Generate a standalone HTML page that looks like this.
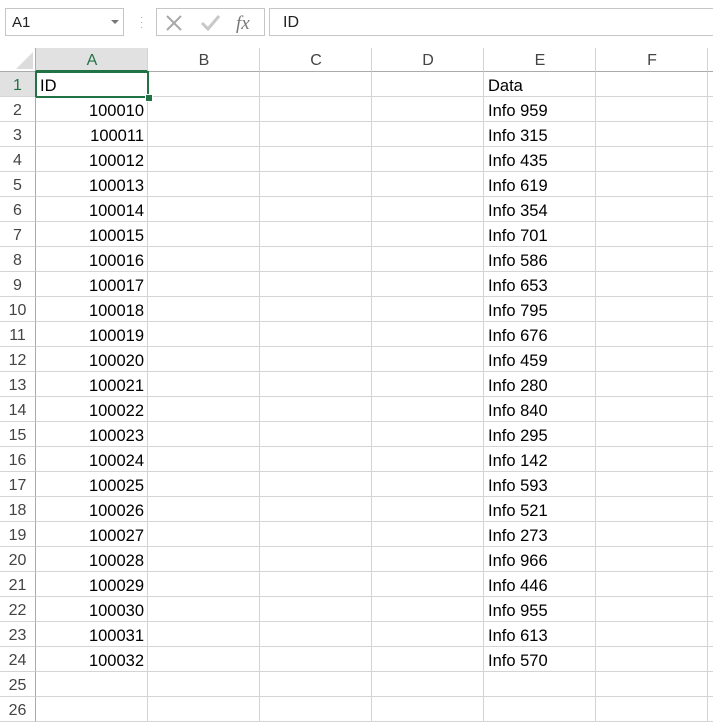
<!DOCTYPE html>
<html><head><meta charset="utf-8"><style>
body{margin:0;width:713px;height:724px;background:#fff;font-family:"Liberation Sans",sans-serif;position:relative;overflow:hidden}
.a{position:absolute}
.g{position:absolute;left:0;top:48px;display:grid;grid-template-columns:36px repeat(6,112px) 20px;grid-template-rows:24px repeat(26,25px)}
.g div{box-sizing:border-box;border-right:1px solid #d4d4d4;border-bottom:1px solid #d4d4d4;padding:2px 3px 0 4px;font-size:16.5px;line-height:24px;white-space:nowrap;overflow:hidden;color:#000}
.g div.r{text-align:right}
.g div.h{text-align:center;color:#444;border-bottom:1px solid #ababab;line-height:24px;font-size:16px;padding-top:1px}
.g div.n{text-align:center;color:#444;border-right:1px solid #ababab;padding:2px 0 0 0;font-size:16px}
</style></head><body>
<div class="a" style="left:5px;top:8px;width:119px;height:28px;border:1px solid #c6c6c6;font-size:15px;line-height:28px;color:#222;padding-left:6px;box-sizing:border-box">A1</div>
<div class="a" style="left:111px;top:20px;width:0;height:0;border-left:4px solid transparent;border-right:4px solid transparent;border-top:4px solid #777"></div>
<div class="a" style="left:140px;top:15px;color:#aaa;font-size:10px;line-height:5px">·<br>·<br>·</div>
<div class="a" style="left:156px;top:8px;width:109px;height:28px;border:1px solid #c6c6c6;box-sizing:border-box"></div>
<svg class="a" style="left:164px;top:13px" width="95" height="20"><path d="M3 3L17 17M17 3L3 17" stroke="#a8a8a8" stroke-width="2"/><path d="M38 10L44 16L55 3" stroke="#c8c8c8" stroke-width="3" fill="none"/><text x="72" y="16" font-family="Liberation Serif" font-style="italic" font-size="19" fill="#777">fx</text></svg>
<div class="a" style="left:269px;top:8px;width:450px;height:28px;border:1px solid #c6c6c6;box-sizing:border-box;font-size:16px;line-height:28px;padding-left:13px;color:#222">ID</div>
<div class="g">
<div class="h" style="border-right:1px solid #ababab;padding:0"><svg width="34" height="22"><path d="M32 4L32 21L15 21Z" fill="#dcdcdc"/></svg></div><div class="h" style="background:#e1e1e1;color:#217346;border-bottom:2px solid #217346">A</div><div class="h">B</div><div class="h">C</div><div class="h">D</div><div class="h">E</div><div class="h">F</div><div class="h"></div>
<div class="n" style="background:#e1e1e1;color:#217346">1</div><div style="outline:2px solid #217346;outline-offset:-1px">ID</div><div></div><div></div><div></div><div>Data</div><div></div><div></div>
<div class="n">2</div><div class="r">100010</div><div></div><div></div><div></div><div>Info 959</div><div></div><div></div>
<div class="n">3</div><div class="r">100011</div><div></div><div></div><div></div><div>Info 315</div><div></div><div></div>
<div class="n">4</div><div class="r">100012</div><div></div><div></div><div></div><div>Info 435</div><div></div><div></div>
<div class="n">5</div><div class="r">100013</div><div></div><div></div><div></div><div>Info 619</div><div></div><div></div>
<div class="n">6</div><div class="r">100014</div><div></div><div></div><div></div><div>Info 354</div><div></div><div></div>
<div class="n">7</div><div class="r">100015</div><div></div><div></div><div></div><div>Info 701</div><div></div><div></div>
<div class="n">8</div><div class="r">100016</div><div></div><div></div><div></div><div>Info 586</div><div></div><div></div>
<div class="n">9</div><div class="r">100017</div><div></div><div></div><div></div><div>Info 653</div><div></div><div></div>
<div class="n">10</div><div class="r">100018</div><div></div><div></div><div></div><div>Info 795</div><div></div><div></div>
<div class="n">11</div><div class="r">100019</div><div></div><div></div><div></div><div>Info 676</div><div></div><div></div>
<div class="n">12</div><div class="r">100020</div><div></div><div></div><div></div><div>Info 459</div><div></div><div></div>
<div class="n">13</div><div class="r">100021</div><div></div><div></div><div></div><div>Info 280</div><div></div><div></div>
<div class="n">14</div><div class="r">100022</div><div></div><div></div><div></div><div>Info 840</div><div></div><div></div>
<div class="n">15</div><div class="r">100023</div><div></div><div></div><div></div><div>Info 295</div><div></div><div></div>
<div class="n">16</div><div class="r">100024</div><div></div><div></div><div></div><div>Info 142</div><div></div><div></div>
<div class="n">17</div><div class="r">100025</div><div></div><div></div><div></div><div>Info 593</div><div></div><div></div>
<div class="n">18</div><div class="r">100026</div><div></div><div></div><div></div><div>Info 521</div><div></div><div></div>
<div class="n">19</div><div class="r">100027</div><div></div><div></div><div></div><div>Info 273</div><div></div><div></div>
<div class="n">20</div><div class="r">100028</div><div></div><div></div><div></div><div>Info 966</div><div></div><div></div>
<div class="n">21</div><div class="r">100029</div><div></div><div></div><div></div><div>Info 446</div><div></div><div></div>
<div class="n">22</div><div class="r">100030</div><div></div><div></div><div></div><div>Info 955</div><div></div><div></div>
<div class="n">23</div><div class="r">100031</div><div></div><div></div><div></div><div>Info 613</div><div></div><div></div>
<div class="n">24</div><div class="r">100032</div><div></div><div></div><div></div><div>Info 570</div><div></div><div></div>
<div class="n">25</div><div></div><div></div><div></div><div></div><div></div><div></div><div></div>
<div class="n">26</div><div></div><div></div><div></div><div></div><div></div><div></div><div></div>
</div>
<div class="a" style="left:145px;top:94px;width:6px;height:6px;background:#217346;border:1px solid #fff"></div>
</body></html>
